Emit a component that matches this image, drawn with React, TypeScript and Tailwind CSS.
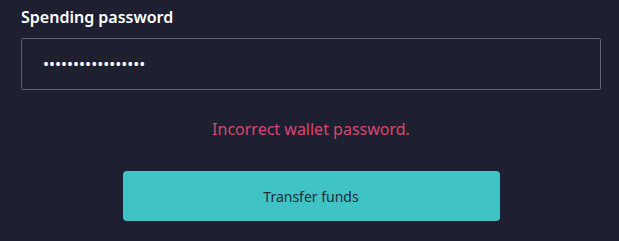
import React from 'react';

const App: React.FC = () => {
  return (
    <div
      className="w-[619px] h-[241px] bg-[#1e1f31] pl-[21px] pr-[18px] pt-[6px] flex flex-col"
      style={{ fontFamily: '"Noto Sans", sans-serif' }}
    >
      <label className="text-[16px] font-semibold text-white leading-[22px]">Spending password</label>
      <div className="mt-[10px] h-[52px] border border-[#5f6175] rounded-[2px] flex items-center px-[21px]">
        <input
          type="password"
          defaultValue="qwertyuiopasdfghj"
          className="w-full bg-transparent outline-none text-white text-[16px]"
        />
      </div>
      <p className="mt-[28px] text-center text-[16px] leading-[22px] text-[#d9486b]">Incorrect wallet password.</p>
      <div className="mt-[31px] flex justify-center">
        <button className="w-[377px] h-[50px] rounded-[4px] bg-[#40c3c4] text-[#1d2c3c] text-[14px]">
          Transfer funds
        </button>
      </div>
    </div>
  );
};

export default App;
